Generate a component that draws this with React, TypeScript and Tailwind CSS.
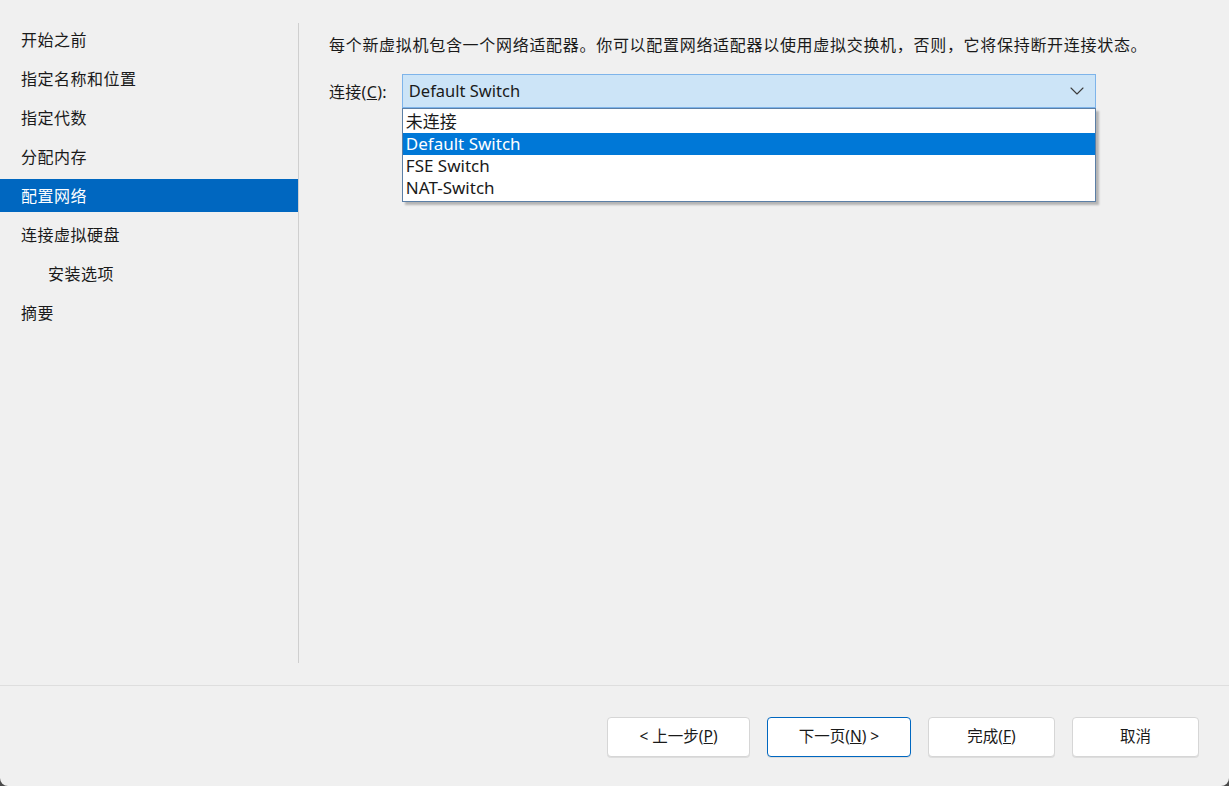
import { ChevronDown } from 'lucide-react'

const steps = [
  { label: '开始之前' },
  { label: '指定名称和位置' },
  { label: '指定代数' },
  { label: '分配内存' },
  { label: '配置网络', active: true },
  { label: '连接虚拟硬盘' },
  { label: '安装选项', indent: true },
  { label: '摘要' },
]

const options = ['未连接', 'Default Switch', 'FSE Switch', 'NAT-Switch']

function WizardButton({ children, className }: { children: React.ReactNode; className: string }) {
  return (
    <button
      className={
        'h-[40px] rounded-[4px] bg-white text-[15.5px] text-[#1a1a1a] shadow-[0_1px_0_rgba(0,0,0,0.08)] border ' +
        className
      }
    >
      {children}
    </button>
  )
}

export default function App() {
  return (
    <div className="w-[1229px] h-[786px] bg-[#4a4a4a] font-['Noto_Sans','Noto_Sans_CJK_SC',sans-serif]">
      <div className="w-full h-full bg-[#f0f0f0] rounded-b-[8px] flex flex-col text-[#1a1a1a]">
        <div className="h-[686px] flex border-b border-[#dedede]">
          {/* steps */}
          <div className="w-[298px] pt-[23px] flex flex-col gap-[6px] text-[16px]">
            {steps.map((s) => (
              <div
                key={s.label}
                className={
                  'h-[33px] flex items-center tracking-[0.5px] ' +
                  (s.indent ? 'pl-[48px] ' : 'pl-[21px] ') +
                  (s.active ? 'bg-[#0067c0] text-white' : '')
                }
              >
                {s.label}
              </div>
            ))}
          </div>
          <div className="mt-[23px] h-[640px] w-px bg-[#cfcfcf]" />

          {/* content */}
          <div className="flex-1 pl-[30px] pt-[33px]">
            <p className="text-[16px] leading-[24px] tracking-[0.7px]">
              每个新虚拟机包含一个网络适配器。你可以配置网络适配器以使用虚拟交换机，否则，它将保持断开连接状态。
            </p>
            <div className="mt-[17px] flex items-start gap-[15px]">
              <div className="pt-[6px] text-[16px] tracking-[0.3px]">
                连接(<span className="underline">C</span>):
              </div>
              <div className="relative w-[694px]">
                <div className="h-[34px] border border-[#7eb4ea] bg-[#cce4f7] flex items-center justify-between pl-[6px] pr-[6px] text-[16.5px]">
                  <span>Default Switch</span>
                  <ChevronDown size={24} strokeWidth={1.1} className="text-[#3c3c3c]" />
                </div>
                <div className="absolute left-0 top-[34px] w-[694px] border border-[#5b7fa6] bg-white pt-[2px] pb-[2px] shadow-[3px_3px_2px_rgba(0,0,0,0.25)] text-[17px] leading-[22px]">
                  {options.map((o) => (
                    <div
                      key={o}
                      className={'px-[3px] ' + (o === 'Default Switch' ? 'bg-[#0078d7] text-white' : '')}
                    >
                      {o}
                    </div>
                  ))}
                </div>
              </div>
            </div>
          </div>
        </div>

        {/* footer buttons */}
        <div className="flex-1 flex justify-end items-start pt-[31px] pr-[30px] gap-[17px]">
          <WizardButton className="w-[143px] border-[#d6d6d6]">
            &lt; 上一步(<span className="underline">P</span>)
          </WizardButton>
          <WizardButton className="w-[144px] border-[#0067c0]">
            下一页(<span className="underline">N</span>) &gt;
          </WizardButton>
          <WizardButton className="w-[127px] border-[#d6d6d6]">
            完成(<span className="underline">F</span>)
          </WizardButton>
          <WizardButton className="w-[127px] border-[#d6d6d6]">取消</WizardButton>
        </div>
      </div>
    </div>
  )
}
